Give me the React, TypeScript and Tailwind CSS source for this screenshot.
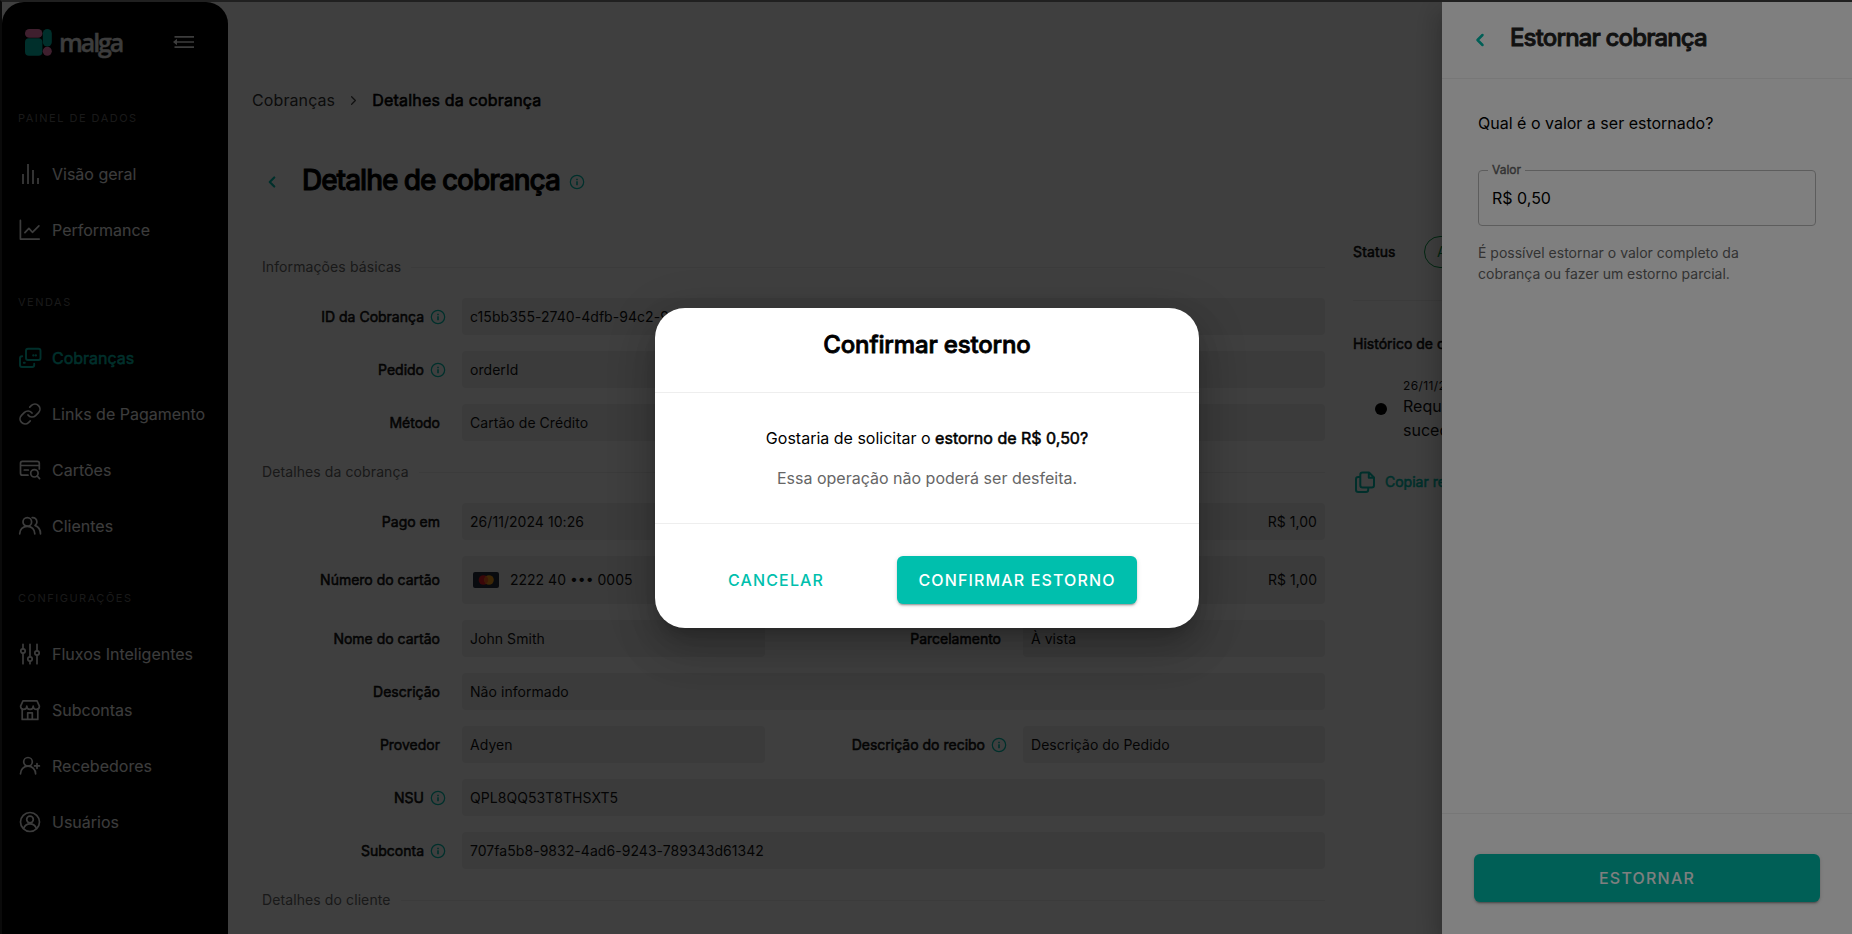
import type { ReactNode } from "react";
import { ChevronLeft, ChevronRight, Link } from "lucide-react";

const FONT = "font-[Inter,'Liberation_Sans',sans-serif]";

function Icon({ children, size = 24, sw = 1.7, className = "" }: { children: ReactNode; size?: number; sw?: number; className?: string }) {
  return (
    <svg
      width={size} height={size} viewBox="0 0 24 24" fill="none" stroke="currentColor"
      strokeWidth={sw} strokeLinecap="round" strokeLinejoin="round" className={`shrink-0 ${className}`}
    >
      {children}
    </svg>
  );
}

const icons: Record<string, ReactNode> = {
  overview: <Icon><path strokeLinecap="butt" d="M5 12v10M10 2v20M15 8v14M20 16v6" /></Icon>,
  performance: <Icon><path d="M2.4 2.4v18.7h18.8" /><path d="M6.9 14.7l4-4.3 3.5 3.9 6.5-6.5" /></Icon>,
  charges: (
    <Icon sw={1.9}>
      <rect x="8" y="2.8" width="14.5" height="11.2" rx="2" />
      <path d="M15.3 9.4h.1M17.8 9.4h.1" strokeWidth="2.2" />
      <path d="M4.200 10.200c-1.400 0-2.200.8-2.200 2V19c0 1.200.8 2 2 2h10.200c1.200 0 2-.8 2-2v-1.200M5.800 16.700h1" />
    </Icon>
  ),
  cards: (
    <Icon>
      <path d="M21.3 11V5.4c0-1.200-.8-2-2-2H4.500c-1.200 0-2 .8-2 2v9.800c0 1.200.8 2 2 2H10M2.500 7.500h18.800M6.300 12h4" />
      <circle cx="16.4" cy="15.3" r="3.7" />
      <path d="M19.2 18l2.4 2.600" />
    </Icon>
  ),
  customers: (
    <Icon>
      <circle cx="9.3" cy="7.9" r="4.3" />
      <path d="M1.700 19.800c0-4.300 3.200-7.500 7.600-7.500s7.500 3.200 7.500 7.500M14.200 3.700c2.600-.3 4.700 1.600 4.700 4.200 0 1.500-.7 2.700-1.900 3.500 3.300 1.300 5.500 4.500 5.500 8.400" />
    </Icon>
  ),
  flows: (
    <Icon>
      <path d="M5 2.300v4.400M5 11.300v10.400M12 2.300v12.400M12 19.300v2.400M19 2.300v6.400M19 13.300v8.400" />
      <circle cx="5" cy="9" r="2.2" />
      <circle cx="12" cy="17" r="2.2" />
      <circle cx="19" cy="11" r="2.2" />
    </Icon>
  ),
  store: (
    <Icon>
      <path d="M5 2.800h14l2.400 5.400c0 2-1.300 3.200-3 3.200s-3.200-1.200-3.200-3.200c0 2-1.500 3.200-3.200 3.200s-3.200-1.200-3.200-3.200c0 2-1.500 3.200-3.200 3.200s-3-1.200-3-3.200z" />
      <path d="M4.200 11v10.400h15.600V11M9.700 21.400v-6.600h4.600v6.600" />
    </Icon>
  ),
  receivers: (
    <Icon>
      <circle cx="10" cy="7.8" r="4.3" />
      <path d="M2.500 19.800c0-4.300 3.200-7.700 7.500-7.700s7.600 3.400 7.600 7.700M19 9.500v4.800M16.600 11.900h4.800" />
    </Icon>
  ),
  users: (
    <Icon>
      <circle cx="12" cy="12" r="9.5" />
      <circle cx="12" cy="9.5" r="3.3" />
      <path d="M5.700 18.300c1-2.700 3.400-4.500 6.300-4.500s5.300 1.800 6.300 4.500" />
    </Icon>
  ),
  links: <Link size={24} strokeWidth={1.7} className="shrink-0" />,
};

const menu = [
  { title: "Painel de dados", items: [["overview", "Visão geral"], ["performance", "Performance"]] },
  {
    title: "Vendas",
    items: [["charges", "Cobranças"], ["links", "Links de Pagamento"], ["cards", "Cartões"], ["customers", "Clientes"]],
  },
  {
    title: "Configurações",
    items: [["flows", "Fluxos Inteligentes"], ["store", "Subcontas"], ["receivers", "Recebedores"], ["users", "Usuários"]],
  },
];

function Sidebar() {
  return (
    <aside className="w-[226px] shrink-0 rounded-t-[22px] bg-black text-[#f2f2f2]">
      <div className="flex h-20 items-center pl-[23px]">
        <svg width="27" height="27" viewBox="0 0 27 27">
          <rect width="17.4" height="8.8" rx="4.4" fill="#ff7eb9" />
          <rect y="9.2" width="17.4" height="17.6" rx="4" fill="#00bfad" />
          <rect x="17.8" width="9" height="17.6" rx="4.5" fill="#00bfad" />
          <circle cx="22.3" cy="22.3" r="4.5" fill="#ff7eb9" />
        </svg>
        <span className="ml-[7px] w-[65px] pb-px font-['Open_Sans',sans-serif] text-[25px] leading-6 font-semibold tracking-[-2.1px] [-webkit-text-stroke:0.3px]">malga</span>
        <svg width="22" height="14" viewBox="0 0 22 14" fill="none" stroke="currentColor" strokeWidth="1.7" className="ml-[49px]">
          <path d="M1.5 1.8H21M3 7H21M1.5 12.2H21" />
          <path d="M0 7l4-3.2v6.400z" fill="currentColor" stroke="none" />
        </svg>
      </div>
      <nav className="pt-2">
        {menu.map((group, i) => (
          <div key={group.title} className={i > 0 ? "mt-4" : ""}>
            <h3 className="flex h-14 items-center pl-4 text-[11px] tracking-[1.5px] text-[#666] uppercase">{group.title}</h3>
            {group.items.map(([icon, label]) => (
              <a key={label} className={`flex h-14 items-center gap-[10px] pl-4 text-base ${icon === "charges" ? "text-[#00bfad]" : ""}`}>
                {icons[icon]}
                <span className={icon === "charges" ? "[-webkit-text-stroke:0.5px]" : ""}>{label}</span>
              </a>
            ))}
          </div>
        ))}
      </nav>
    </aside>
  );
}

function Info() {
  return (
    <Icon size={16} sw={1.9} className="text-[#00bfad]">
      <circle cx="12" cy="12" r="10" />
      <path strokeLinecap="butt" strokeWidth="2.4" d="M12 11v6M12 7v2.200" />
    </Icon>
  );
}

function Divider({ children }: { children: ReactNode }) {
  return (
    <div className="flex h-[62px] items-center gap-[10px]">
      <span className="text-sm tracking-[0.1px] text-[#666]">{children}</span>
      <span className="h-px flex-1 bg-[#eee]" />
    </div>
  );
}

function Label({ children, info, className }: { children?: ReactNode; info?: boolean; className: string }) {
  return (
    <div className={`flex shrink-0 items-center justify-end gap-[6px] text-sm text-[#111] ${info ? "pr-4" : "pr-[22px]"} ${className}`}>
      <span className="[-webkit-text-stroke:0.55px]">{children}</span>
      {info && <Info />}
    </div>
  );
}

function Value({ children, tall, right, className = "flex-1" }: { children?: ReactNode; tall?: boolean; right?: boolean; className?: string }) {
  return (
    <div className={`flex items-center rounded bg-[#eee] px-2 text-sm text-[#111] ${tall ? "h-12" : "h-[37px] tracking-[0.05px]"} ${right ? "justify-end" : ""} ${className}`}>
      {children}
    </div>
  );
}

interface FieldProps {
  label: string;
  value: ReactNode;
  info?: boolean;
  tall?: boolean;
  second?: { label?: string; value: string; info?: boolean; right?: boolean };
}

function Field({ label, value, info, tall, second }: FieldProps) {
  return (
    <div className="flex">
      <Label info={info} className="w-[200px]">{label}</Label>
      <Value tall={tall} className={second ? "w-[303px]" : "flex-1"}>{value}</Value>
      {second && (
        <>
          <Label info={second.info} className="w-[258px]">{second.label}</Label>
          <Value tall={tall} right={second.right}>{second.value}</Value>
        </>
      )}
    </div>
  );
}

function CardNumber() {
  return (
    <span className="flex items-center gap-[11px] pl-[3px]">
      <svg width="26" height="16" viewBox="0 0 26 16">
        <rect width="26" height="16" rx="2" fill="#252d3f" />
        <circle cx="10.5" cy="8" r="4.8" fill="#eb1c26" />
        <circle cx="16" cy="8" r="4.8" fill="#f79e1b" />
        <path d="M13.250 4.100a4.800 4.800 0 0 1 0 7.800 4.800 4.800 0 0 1 0-7.800z" fill="#f2601f" />
      </svg>
      2222 40 ••• 0005
    </span>
  );
}

function Details() {
  return (
    <main className="h-full min-w-0 flex-1 overflow-hidden">
      <div className="mt-[86px] flex h-6 items-center pl-6 text-base tracking-[0.1px] text-[#333]">
        Cobranças
        <ChevronRight size={15} strokeWidth={2} className="mx-[11px] text-[#444]" />
        <span className="tracking-[0.2px] text-black [-webkit-text-stroke:0.6px]">Detalhes da cobrança</span>
      </div>
      <div className="mt-[48px] flex h-10 items-center pl-[35px] text-[28px] text-black">
        <ChevronLeft size={18} strokeWidth={3} className="mt-[4px] mr-[21px] text-[#00bfad]" />
        <span className="font-medium tracking-[-1.03px] [-webkit-text-stroke:0.9px]">Detalhe de cobrança</span>
        <span className="mt-[4px] ml-[9px]"><Info /></span>
      </div>
      <div className="mt-[36px] flex gap-7 pl-[34px]">
        <section className="w-[1063px] shrink-0">
          <Divider>Informações básicas</Divider>
          <div className="flex flex-col gap-4">
            <Field label="ID da Cobrança" info value="c15bb355-2740-4dfb-94c2-9" />
            <Field label="Pedido" info value="orderId" />
            <Field label="Método" value="Cartão de Crédito" />
          </div>
          <Divider>Detalhes da cobrança</Divider>
          <div className="flex flex-col gap-4">
            <Field label="Pago em" value="26/11/2024 10:26" second={{ value: "R$ 1,00", right: true }} />
            <Field label="Número do cartão" tall value={<CardNumber />} second={{ value: "R$ 1,00", right: true }} />
            <Field label="Nome do cartão" value="John Smith" second={{ label: "Parcelamento", value: "À vista" }} />
            <Field label="Descrição" value="Não informado" />
            <Field label="Provedor" value="Adyen" second={{ label: "Descrição do recibo", value: "Descrição do Pedido", info: true }} />
            <Field label="NSU" info value="QPL8QQ53T8THSXT5" />
            <Field label="Subconta" info value="707fa5b8-9832-4ad6-9243-789343d61342" />
          </div>
          <Divider>Detalhes do cliente</Divider>
        </section>
        <section className="flex-1 text-sm text-[#111]">
          <div className="flex h-8 items-center">
            <span className="w-[71px] tracking-[0.15px] [-webkit-text-stroke:0.55px]">Status</span>
            <span className="flex h-8 w-24 items-center rounded-full border border-[#0a9f4a] px-3 text-[#0a9f4a]">A</span>
          </div>
          <div className="mt-8 h-px bg-[#eee]" />
          <p className="mt-8 h-5 pt-px leading-5 whitespace-nowrap [-webkit-text-stroke:0.55px]">Histórico de cobrança</p>
          <div className="mt-[23px] flex items-center">
            <span className="mr-4 ml-[22px] size-3 rounded-full bg-black" />
            <div className="w-[150px]">
              <p className="h-[18px] text-xs leading-5 tracking-[0.4px]">26/11/2024</p>
              <p className="text-base leading-6">Requisição bem sucedida</p>
            </div>
          </div>
          <div className="mt-7 flex items-center whitespace-nowrap text-[#00bfad]">
            <Icon size={24} sw={2}>
              <path d="M9.500 2.500h6.500l5 5v7.800c0 1.300-.9 2.200-2.200 2.200H9.500c-1.300 0-2.200-.9-2.200-2.200V4.700c0-1.300.9-2.200 2.200-2.200zM15.800 2.800v5h5M7 7H5.200C3.900 7 3 7.900 3 9.200v10.600C3 21.100 3.900 22 5.200 22H13c1.300 0 2.200-.9 2.200-2.200v-2" />
            </Icon>
            <span className="ml-2 [-webkit-text-stroke:0.55px]">Copiar requisição</span>
          </div>
        </section>
      </div>
    </main>
  );
}

const BTN_SHADOW = "shadow-[0_3px_1px_-2px_rgba(0,0,0,0.2),0_2px_2px_0_rgba(0,0,0,0.14),0_1px_5px_0_rgba(0,0,0,0.12)]";

function RefundDrawer() {
  return (
    <div className="absolute inset-y-0 right-0 flex w-[410px] flex-col bg-white shadow-[0_8px_10px_-5px_rgba(0,0,0,0.2),0_16px_24px_2px_rgba(0,0,0,0.14),0_6px_30px_5px_rgba(0,0,0,0.12)]">
      <header className="flex h-[77px] items-start border-b border-[#eee] pt-5 pl-7">
        <ChevronLeft size={20} strokeWidth={3} className="mt-2 text-[#00bfad]" />
        <h2 className="ml-5 text-2xl leading-8 font-medium tracking-[-0.85px] text-[#222] [-webkit-text-stroke:0.8px]">Estornar cobrança</h2>
      </header>
      <div className="flex-1 px-9 pt-8">
        <p className="leading-6 text-black">Qual é o valor a ser estornado?</p>
        <fieldset className="mt-[26px] h-[65px] rounded border border-[#bbb] px-[9px]">
          <legend className="px-1 text-xs leading-[18px] text-[#666] [-webkit-text-stroke:0.4px]">Valor</legend>
          <p className="mt-[7px] px-1 leading-6 text-black">R$ 0,50</p>
        </fieldset>
        <p className="mt-4 w-[290px] text-sm leading-[21px] text-[#666]">É possível estornar o valor completo da cobrança ou fazer um estorno parcial.</p>
      </div>
      <footer className="h-[121px] border-t border-[#eee] px-8 pt-10">
        <button className={`h-12 w-full rounded-md bg-[#00bfad] font-medium tracking-[1.2px] text-white ${BTN_SHADOW}`}>ESTORNAR</button>
      </footer>
    </div>
  );
}

function ConfirmDialog() {
  return (
    <div className="w-[544px] rounded-[30px] bg-white text-center text-black shadow-[0_11px_15px_-7px_rgba(0,0,0,0.2),0_24px_38px_3px_rgba(0,0,0,0.14),0_9px_46px_8px_rgba(0,0,0,0.12)]">
      <h2 className="h-[85px] border-b border-[#eee] pt-[21px] text-2xl leading-8 font-medium tracking-[-0.15px] [-webkit-text-stroke:0.8px]">Confirmar estorno</h2>
      <div className="h-[131px] border-b border-[#eee] pt-[33px]">
        <p className="leading-6">
          Gostaria de solicitar o <span className="[-webkit-text-stroke:0.55px]">estorno de R$ 0,50?</span>
        </p>
        <p className="mt-4 leading-6 text-[#666]">Essa operação não poderá ser desfeita.</p>
      </div>
      <div className="flex h-[104px] items-center justify-between pt-2 pr-[62px] pl-[73px] font-medium tracking-[1.14px]">
        <button className="text-[#00bfad]">CANCELAR</button>
        <button className={`h-12 w-[240px] rounded-md bg-[#00bfad] text-white ${BTN_SHADOW}`}>CONFIRMAR ESTORNO</button>
      </div>
    </div>
  );
}

export default function App() {
  return (
    <div className={`relative h-[934px] w-[1852px] overflow-hidden border-t-2 border-l-2 border-t-[#202020] border-l-[#0a0a0a] bg-white ${FONT}`}>
      <div className="flex h-full">
        <Sidebar />
        <Details />
      </div>
      <div className="absolute inset-0 bg-black/50">
        <RefundDrawer />
      </div>
      <div className="absolute inset-0 flex items-center justify-center bg-black/50">
        <ConfirmDialog />
      </div>
    </div>
  );
}
